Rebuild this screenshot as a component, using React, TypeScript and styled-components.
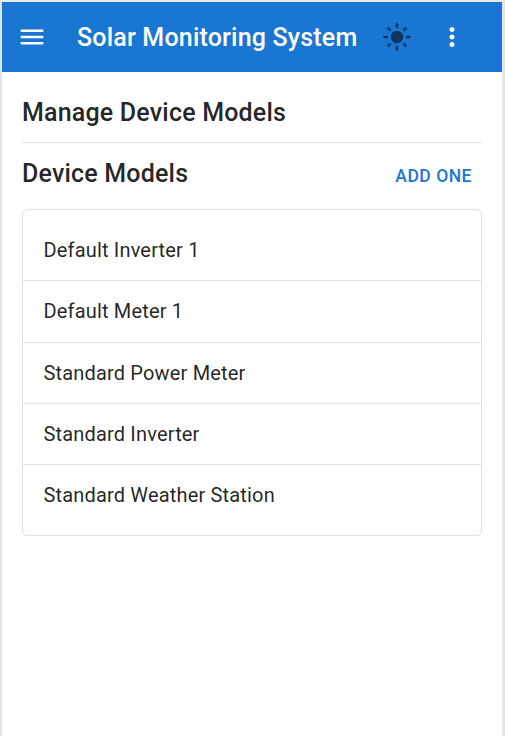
import React from 'react';
import styled, { createGlobalStyle } from 'styled-components';

const GlobalStyle = createGlobalStyle`
  * { box-sizing: border-box; }
  body { margin: 0; background: #fff; font-family: Roboto, sans-serif; color: rgba(0, 0, 0, 0.87); }
`;

const Page = styled.div`
  height: 736px;
  border-left: 2px solid #dfe3e8;
  border-right: 3px solid #e6e6e6;
  border-top: 2px solid #e6e8ea;
  overflow: hidden;
`;

const AppBar = styled.header`
  height: 70px;
  padding: 0 35px 0 15px;
  display: flex;
  align-items: center;
  background: #1976d2;
  color: #fff;
`;

const Title = styled.h1`
  flex: 1;
  margin: 0 0 0 30px;
  padding-top: 1px;
  font-size: 25px;
  line-height: 40px;
  font-weight: 500;
  letter-spacing: 0.19px;
  white-space: nowrap;
`;

const IconButton = styled.button<{ $gap?: number; $tint?: string }>`
  display: flex;
  padding: 0;
  margin-left: ${({ $gap = 0 }) => $gap}px;
  border: 0;
  background: none;
  color: ${({ $tint = 'inherit' }) => $tint};
`;

const Content = styled.main`
  padding: 21px 20px 0;
`;

const Heading = styled.h2`
  margin: 0;
  font-size: 25px;
  line-height: 40px;
  font-weight: 500;
  letter-spacing: 0.19px;
`;

const SectionHeader = styled.div`
  margin-top: 9px;
  padding: 11px 10px 0 0;
  height: 67px;
  display: flex;
  justify-content: space-between;
  border-top: 1px solid #e0e0e0;
`;

const TextButton = styled.button`
  height: 44px;
  padding: 0;
  border: 0;
  background: none;
  color: #1976d2;
  font: 500 17.5px/30px Roboto, sans-serif;
  letter-spacing: 0.5px;
`;

const List = styled.ul`
  margin: 0;
  padding: 9px 0 10px;
  list-style: none;
  border: 1px solid #e0e0e0;
  border-radius: 5px;
`;

const Item = styled.li`
  height: 61.25px;
  padding: 0 20.5px;
  display: flex;
  align-items: center;
  font-size: 20px;
  letter-spacing: 0.17px;
  & + & { border-top: 1px solid #e0e0e0; }
`;

const rayAngles = [0, 45, 90, 135, 180, 225, 270, 315];

const models = [
  'Default Inverter 1',
  'Default Meter 1',
  'Standard Power Meter',
  'Standard Inverter',
  'Standard Weather Station',
];

export default function App() {
  return (
    <Page>
      <GlobalStyle />
      <AppBar>
        <IconButton aria-label="Menu">
          <svg width="30" height="30" viewBox="0 0 24 24" fill="currentColor">
            <path d="M3 18h18v-2H3v2zm0-5h18v-2H3v2zm0-7v2h18V6H3z" />
          </svg>
        </IconButton>
        <Title>Solar Monitoring System</Title>
        <IconButton aria-label="Toggle theme" $tint="#0f3660">
          <svg width="30" height="30" viewBox="0 0 24 24" fill="currentColor">
            <circle cx="12" cy="12" r="5" />
            {rayAngles.map((angle) => (
              <path
                key={angle}
                d={angle % 90 === 0 ? 'M12 2v2' : 'M12 2.3v1.5'}
                transform={`rotate(${angle} 12 12)`}
                stroke="currentColor"
                strokeWidth="2"
                strokeLinecap="round"
              />
            ))}
          </svg>
        </IconButton>
        <IconButton aria-label="More" $gap={25}>
          <svg width="30" height="30" viewBox="0 0 24 24" fill="currentColor">
            <path d="M12 8c1.1 0 2-.9 2-2s-.9-2-2-2-2 .9-2 2 .9 2 2 2zm0 2c-1.1 0-2 .9-2 2s.9 2 2 2 2-.9 2-2-.9-2-2-2zm0 6c-1.1 0-2 .9-2 2s.9 2 2 2 2-.9 2-2-.9-2-2-2z" />
          </svg>
        </IconButton>
      </AppBar>
      <Content>
        <Heading>Manage Device Models</Heading>
        <SectionHeader>
          <Heading>Device Models</Heading>
          <TextButton>ADD ONE</TextButton>
        </SectionHeader>
        <List>
          {models.map((name) => (
            <Item key={name}>{name}</Item>
          ))}
        </List>
      </Content>
    </Page>
  );
}
